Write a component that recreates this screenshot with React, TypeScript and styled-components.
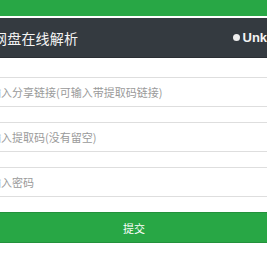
import styled, { createGlobalStyle } from 'styled-components'

const GlobalStyle = createGlobalStyle`
  html,
  body {
    margin: 0;
    padding: 0;
    background: #fff;
    overflow: hidden;
    font-family: 'Liberation Sans', 'Noto Sans CJK SC', sans-serif;
  }
`

export default function App(): JSX.Element {
  return (
    <>
      <GlobalStyle />
      <StyledTopBar />
      <StyledPage>
        <StyledHeader>
          <StyledTitle>网盘在线解析</StyledTitle>
          <StyledStatus>
            <StyledDot />
            Unknown
          </StyledStatus>
        </StyledHeader>
        <StyledForm>
          <StyledInput placeholder='请输入分享链接(可输入带提取码链接)' />
          <StyledInput placeholder='请输入提取码(没有留空)' />
          <StyledInput type='password' placeholder='请输入密码' />
          <StyledButton type='button'>提交</StyledButton>
        </StyledForm>
      </StyledPage>
    </>
  )
}

const StyledTopBar = styled.div`
  height: 16px;
  background: #28a745;
  margin-bottom: 2px;
`

const StyledPage = styled.div`
  width: 334px;
  margin-left: -33px;
`

const StyledHeader = styled.div`
  display: flex;
  align-items: center;
  justify-content: space-between;
  height: 40px;
  padding: 0 0 0 26px;
  background: #343a40;
  border-bottom: 1px solid #2a2e33;
  box-sizing: border-box;
`

const StyledTitle = styled.div`
  color: #f4f4f4;
  font-size: 14px;
  font-family: 'Noto Sans CJK SC', sans-serif;
  letter-spacing: 0.2px;
`

const StyledStatus = styled.div`
  display: flex;
  align-items: center;
  gap: 3px;
  color: #f4f4f4;
  font-size: 13px;
  font-weight: bold;
`

const StyledDot = styled.span`
  width: 7px;
  height: 7px;
  border-radius: 50%;
  background: #eee;
`

const StyledForm = styled.div`
  display: flex;
  flex-direction: column;
  gap: 15px;
  padding-top: 19px;
`

const StyledInput = styled.input`
  height: 30px;
  box-sizing: border-box;
  padding: 0 11px;
  border: 1px solid #dedede;
  border-radius: 2px;
  font-size: 11px;
  font-family: 'Noto Sans CJK SC', sans-serif;
  outline: none;

  &::placeholder {
    color: #9a9a9a;
  }
`

const StyledButton = styled.button`
  height: 31px;
  border: 1px solid #23913c;
  border-radius: 2px;
  background: #28a745;
  color: #fff;
  font-size: 11px;
  font-family: 'Noto Sans CJK SC', sans-serif;
`
